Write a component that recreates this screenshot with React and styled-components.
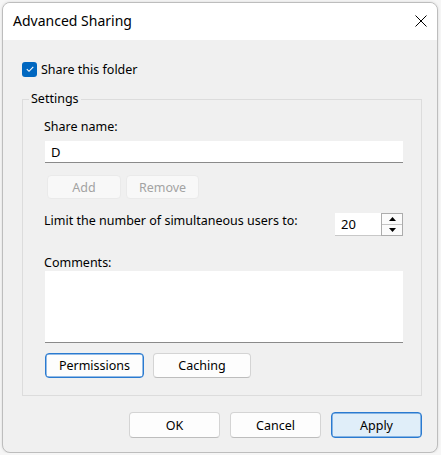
import React from "react";
import styled, { createGlobalStyle, css } from "styled-components";

const Global = createGlobalStyle`
  html, body { margin: 0; padding: 0; background: #f6f6f6; }
  body { font-family: "Noto Sans", "Segoe UI", sans-serif; font-size: 12.5px; color: #000; }
  * { box-sizing: border-box; }
`;

const Window = styled.div`
  margin: 2px 0 0 2px;
  width: 436px;
  height: 451px;
  border: 1px solid #bdbdbd;
  border-radius: 8px;
  overflow: hidden;
  background: #f0f0f0;
  display: flex;
  flex-direction: column;
  box-shadow: 0 0 3px rgba(0,0,0,0.12);
`;

const TitleBar = styled.div`
  height: 37px;
  background: #fff;
  display: flex;
  align-items: center;
  justify-content: space-between;
  padding: 0 9px 1px 10px;
  flex-shrink: 0;
`;

const Title = styled.span`
  font-size: 14px;
  line-height: 18px;
`;

const CloseBtn = styled.button`
  border: 0;
  background: transparent;
  padding: 0;
  width: 14px;
  height: 14px;
  display: flex;
  align-items: center;
  justify-content: center;
`;

const Body = styled.div`
  flex: 1;
  display: flex;
  flex-direction: column;
  padding: 21px 15px 0 19px;
`;

const CheckRow = styled.label`
  display: flex;
  align-items: center;
  height: 16px;
  gap: 4px;
`;

const CheckBox = styled.span`
  width: 15px;
  height: 15px;
  border-radius: 3px;
  background: #0067c0;
  display: flex;
  align-items: center;
  justify-content: center;
`;

const Group = styled.fieldset`
  margin: 14px 0 0 0;
  padding: 0 18px 17px 22px;
  border: 1px solid #dcdcdc;
  border-radius: 0;
  display: flex;
  flex-direction: column;
  min-width: 0;
`;

const Legend = styled.legend`
  margin-left: -16px;
  padding: 0 2px;
  line-height: 16px;
`;

const Label = styled.div`
  line-height: 16px;
  margin-top: ${(p) => p.$mt || 0}px;
  margin-left: -1px;
`;

const fieldBase = css`
  background: #fff;
  border: 0;
  border-bottom: 1px solid #8a8a8a;
  font: inherit;
  color: #000;
`;

const TextInput = styled.div`
  ${fieldBase}
  margin-top: 6px;
  height: 22px;
  padding: 0 6px;
  display: flex;
  align-items: center;
  font-size: 13px;
`;

const TextArea = styled.div`
  ${fieldBase}
  height: 72px;
`;

const ButtonRow = styled.div`
  display: flex;
  gap: ${(p) => p.$gap}px;
  margin-top: ${(p) => p.$mt}px;
  margin-left: ${(p) => p.$ml || 0}px;
  justify-content: ${(p) => (p.$end ? "flex-end" : "flex-start")};
`;

const Button = styled.button`
  width: ${(p) => p.$w}px;
  height: ${(p) => p.$h}px;
  font: inherit;
  border-radius: 4px;
  padding: 0;
  color: #000;
  background: #fdfdfd;
  border: 1px solid #d4d4d4;
  border-bottom-color: #bdbdbd;
  ${(p) =>
    p.$disabled &&
    css`
      color: #a3a3a3;
      background: #f8f8f8;
      border-color: #eaeaea;
    `}
  ${(p) =>
    p.$focus &&
    css`
      border: 1px solid #2a7ad0;
      box-shadow: inset 0 0 0 0.5px #2a7ad0;
    `}
  ${(p) =>
    p.$default &&
    css`
      background: #e0eef9;
      border: 1px solid #2a7ad0;
      box-shadow: inset 0 0 0 0.5px #2a7ad0;
    `}
`;

const LimitRow = styled.div`
  display: flex;
  justify-content: space-between;
  align-items: flex-start;
  margin-top: 14px;
`;

const Spinner = styled.div`
  display: flex;
  height: 23px;
`;

const SpinInput = styled.div`
  width: 46px;
  background: #fff;
  border-bottom: 1px solid #c8c8c8;
  display: flex;
  align-items: center;
  padding-left: 6px;
  font-size: 13px;
`;

const SpinButtons = styled.div`
  width: 22px;
  border: 1px solid #acacac;
  display: flex;
  flex-direction: column;
  background: #f0f0f0;
`;

const SpinHalf = styled.div`
  flex: 1;
  display: flex;
  align-items: center;
  justify-content: center;
  background: #fbfbfb;
  & + & {
    border-top: 1px solid #c4c4c4;
  }
`;

const Footer = styled.div`
  margin-top: 16px;
`;

export default function App() {
  return (
    <>
      <Global />
      <Window>
        <TitleBar>
          <Title>Advanced Sharing</Title>
          <CloseBtn aria-label="Close">
            <svg width="12" height="12" viewBox="0 0 12 12">
              <path d="M0.5 0.5 L11.5 11.5 M11.5 0.5 L0.5 11.5" stroke="#000" strokeWidth="1" />
            </svg>
          </CloseBtn>
        </TitleBar>
        <Body>
          <CheckRow>
            <CheckBox>
              <svg width="10" height="10" viewBox="0 0 10 10">
                <path d="M1.8 5.2 L4 7.3 L8.3 2.8" fill="none" stroke="#fff" strokeWidth="1.1" />
              </svg>
            </CheckBox>
            <span>Share this folder</span>
          </CheckRow>
          <Group>
            <Legend>Settings</Legend>
            <Label $mt={12}>Share name:</Label>
            <TextInput>D</TextInput>
            <ButtonRow $gap={5} $mt={12} $ml={2}>
              <Button $w={74} $h={24} $disabled>Add</Button>
              <Button $w={73} $h={24} $disabled>Remove</Button>
            </ButtonRow>
            <LimitRow>
              <Label>Limit the number of simultaneous users to:</Label>
              <Spinner>
                <SpinInput>20</SpinInput>
                <SpinButtons>
                  <SpinHalf>
                    <svg width="7" height="4" viewBox="0 0 7 4"><path d="M0 4 L3.5 0 L7 4 Z" fill="#000" /></svg>
                  </SpinHalf>
                  <SpinHalf>
                    <svg width="7" height="4" viewBox="0 0 7 4"><path d="M0 0 L3.5 4 L7 0 Z" fill="#000" /></svg>
                  </SpinHalf>
                </SpinButtons>
              </Spinner>
            </LimitRow>
            <Label $mt={19}>Comments:</Label>
            <TextArea />
            <ButtonRow $gap={9} $mt={10}>
              <Button $w={99} $h={25} $focus>Permissions</Button>
              <Button $w={98} $h={25}>Caching</Button>
            </ButtonRow>
          </Group>
          <Footer>
            <ButtonRow $gap={10} $mt={0} $end>
              <Button $w={91} $h={26}>OK</Button>
              <Button $w={91} $h={26}>Cancel</Button>
              <Button $w={91} $h={26} $default>Apply</Button>
            </ButtonRow>
          </Footer>
        </Body>
      </Window>
    </>
  );
}
